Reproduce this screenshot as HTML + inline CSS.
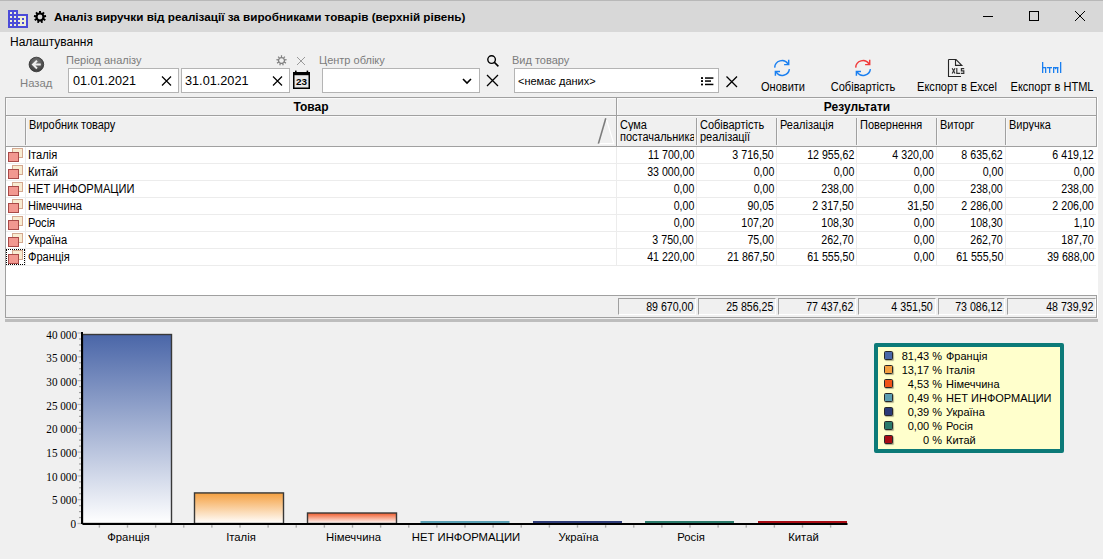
<!DOCTYPE html>
<html><head><meta charset="utf-8"><style>
html,body{margin:0;padding:0;}
body{width:1103px;height:559px;overflow:hidden;background:#f0f0f0;position:relative;font-family:"Liberation Sans",sans-serif;}
.t{position:absolute;white-space:nowrap;}
.b{position:absolute;}
</style></head><body>
<div class="b" style="left:0px;top:0px;width:1103px;height:1px;background:#b8b8b8"></div>
<div class="b" style="left:0px;top:1px;width:1103px;height:31px;background:#d8d8d8"></div>
<svg class="b" style="left:0;top:0" width="50" height="32" viewBox="0 0 50 32">
<path fill="#4b4bd8" d="M8 10h10v4h10v14H8z"/>
<path fill="#f0efd6" d="M18 16h8v10h-8z"/>
<g fill="#f0efd6"><rect x="10" y="12" width="2" height="2"/><rect x="14" y="12" width="2" height="2"/>
<rect x="10" y="16" width="2" height="2"/><rect x="14" y="16" width="2" height="2"/>
<rect x="10" y="20" width="2" height="2"/><rect x="14" y="20" width="2" height="2"/>
<rect x="10" y="24" width="2" height="2"/><rect x="14" y="24" width="2" height="2"/></g>
<g fill="#4b4bd8"><rect x="18" y="18" width="2" height="2"/><rect x="22" y="18" width="2" height="2"/>
<rect x="18" y="22" width="2" height="2"/><rect x="22" y="22" width="2" height="2"/></g>
<path fill="#000" d="M39.04 12.50L38.97 10.89L41.03 10.89L40.96 12.50L42.16 12.94L43.14 11.65L44.72 12.98L43.62 14.17L44.27 15.28L45.84 14.92L46.20 16.96L44.60 17.16L44.37 18.42L45.81 19.16L44.78 20.95L43.42 20.08L42.44 20.90L43.06 22.39L41.12 23.10L40.64 21.56L39.36 21.56L38.88 23.10L36.94 22.39L37.56 20.90L36.58 20.08L35.22 20.95L34.19 19.16L35.63 18.42L35.40 17.16L33.80 16.96L34.16 14.92L35.73 15.28L36.38 14.17L35.28 12.98L36.86 11.65L37.84 12.94Z"/><circle cx="40" cy="17" r="2.4" fill="#d8d8d8"/>
</svg>
<div class="t" style="left:54px;top:11.10px;font-size:11.7px;line-height:11.7px;color:#000;font-family:'Liberation Sans', sans-serif;font-weight:bold;">Аналіз виручки від реалізації за виробниками товарів (верхній рівень)</div>
<svg class="b" style="left:970px;top:0" width="133" height="31" viewBox="0 0 133 31">
<path d="M13 16.5h10" stroke="#000" stroke-width="1"/>
<rect x="59.5" y="11.5" width="9" height="9" fill="none" stroke="#000" stroke-width="1"/>
<path d="M105 11l10 10M115 11l-10 10" stroke="#000" stroke-width="1"/>
</svg>
<div class="t" style="left:10px;top:35.84px;font-size:12px;line-height:12px;color:#000;font-family:'Liberation Sans', sans-serif;">Налаштування</div>
<svg class="b" style="left:28px;top:56px" width="17" height="17" viewBox="0 0 17 17">
<defs><radialGradient id="bg1" cx="50%" cy="35%" r="60%"><stop offset="0" stop-color="#7a7a7a"/><stop offset="1" stop-color="#404040"/></radialGradient></defs>
<circle cx="8.4" cy="8.5" r="7.3" fill="url(#bg1)" stroke="#2e2e2e" stroke-width="0.8"/>
<path d="M12.8 8.6H5M9 4.8L5 8.6l4 3.8" stroke="#eeeeee" stroke-width="2" fill="none"/>
</svg>
<div class="t" style="left:20px;top:78.43px;font-size:11.3px;line-height:11.3px;color:#808080;font-family:'Liberation Sans', sans-serif;">Назад</div>
<div class="t" style="left:66px;top:54.69px;font-size:11px;line-height:11px;color:#7c7c7c;font-family:'Liberation Sans', sans-serif;">Період аналізу</div>
<div class="t" style="left:319px;top:54.69px;font-size:11px;line-height:11px;color:#7c7c7c;font-family:'Liberation Sans', sans-serif;">Центр обліку</div>
<div class="t" style="left:512px;top:54.69px;font-size:11px;line-height:11px;color:#7c7c7c;font-family:'Liberation Sans', sans-serif;">Вид товару</div>
<svg class="b" style="left:270px;top:50px" width="40" height="20" viewBox="0 0 40 20">
<path fill="#808080" d="M10.94 6.94L10.85 5.34L12.15 5.34L12.06 6.94L13.35 7.41L14.32 6.13L15.32 6.97L14.22 8.14L14.90 9.33L16.47 8.96L16.69 10.25L15.10 10.44L14.86 11.79L16.29 12.52L15.64 13.64L14.30 12.77L13.25 13.65L13.88 15.12L12.65 15.57L12.19 14.03L10.81 14.03L10.35 15.57L9.12 15.12L9.75 13.65L8.70 12.77L7.36 13.64L6.71 12.52L8.14 11.79L7.90 10.44L6.31 10.25L6.53 8.96L8.10 9.33L8.78 8.14L7.68 6.97L8.68 6.13L9.65 7.41Z"/><circle cx="11.5" cy="10.5" r="2.3" fill="#f0f0f0"/>
<path d="M27 7l8 8M35 7l-8 8" stroke="#9a9a9a" stroke-width="1"/>
</svg>
<div class="b" style="left:68px;top:68px;width:111px;height:25px;background:#fff;border:1px solid #b4b4b4;box-sizing:border-box"></div>
<div class="b" style="left:181px;top:68px;width:109px;height:25px;background:#fff;border:1px solid #b4b4b4;box-sizing:border-box"></div>
<div class="t" style="left:73px;top:75.33px;font-size:12.6px;line-height:12.6px;color:#000;font-family:'Liberation Sans', sans-serif;">01.01.2021</div>
<div class="t" style="left:185px;top:75.25px;font-size:12.7px;line-height:12.7px;color:#000;font-family:'Liberation Sans', sans-serif;">31.01.2021</div>
<svg class="b" style="left:160px;top:74px" width="14" height="14" viewBox="0 0 14 14"><path d="M2 2.5l9 9M11 2.5l-9 9" stroke="#000" stroke-width="1.2"/></svg>
<svg class="b" style="left:271px;top:74px" width="14" height="14" viewBox="0 0 14 14"><path d="M2 2.5l9 9M11 2.5l-9 9" stroke="#000" stroke-width="1.2"/></svg>
<svg class="b" style="left:292px;top:70px" width="20" height="21" viewBox="0 0 20 21">
<rect x="1.75" y="2.75" width="15.5" height="15.5" fill="#e9e9e9" stroke="#000" stroke-width="1.5"/>
<rect x="1" y="2" width="17" height="3.2" fill="#000"/>
<rect x="3" y="0.6" width="1.6" height="2" fill="#000"/><rect x="14.6" y="0.6" width="1.6" height="2" fill="#000"/>
<text x="4" y="15.3" font-family="Liberation Sans" font-weight="bold" font-size="8.4" fill="#000" textLength="11" lengthAdjust="spacingAndGlyphs">23</text>
</svg>
<div class="b" style="left:322px;top:68px;width:158px;height:25px;background:#fff;border:1px solid #b4b4b4;box-sizing:border-box"></div>
<svg class="b" style="left:460px;top:76px" width="14" height="10" viewBox="0 0 14 10"><path d="M3 3l4 4 4-4" stroke="#000" stroke-width="1.6" fill="none"/></svg>
<svg class="b" style="left:484px;top:53px" width="18" height="16" viewBox="0 0 18 16"><circle cx="7.6" cy="6.6" r="3.8" stroke="#000" stroke-width="1.4" fill="none"/><path d="M10.4 9.4l4 4" stroke="#000" stroke-width="1.5"/></svg>
<svg class="b" style="left:485px;top:73px" width="16" height="15" viewBox="0 0 16 15"><path d="M2 2l11 11M13 2l-11 11" stroke="#000" stroke-width="1.3"/></svg>
<div class="b" style="left:514px;top:68px;width:205px;height:25px;background:#fff;border:1px solid #b4b4b4;box-sizing:border-box"></div>
<div class="t" style="left:518px;top:75.69px;font-size:11px;line-height:11px;color:#000;font-family:'Liberation Sans', sans-serif;">&lt;немає даних&gt;</div>
<svg class="b" style="left:699px;top:75px" width="17" height="12" viewBox="0 0 17 12">
<rect x="2" y="2" width="2" height="2" rx="0.6" fill="#000"/><rect x="6" y="2.3" width="8.4" height="1.5" fill="#000"/>
<rect x="2" y="5" width="2" height="2" rx="0.6" fill="#000"/><rect x="6" y="5.3" width="6" height="1.5" fill="#000"/>
<rect x="2" y="8.4" width="2" height="2" rx="0.6" fill="#000"/><rect x="6" y="8.7" width="8.4" height="1.5" fill="#000"/>
</svg>
<svg class="b" style="left:724px;top:74px" width="16" height="15" viewBox="0 0 16 15"><path d="M2.5 2.5l10.5 10.5M13 2.5l-10.5 10.5" stroke="#000" stroke-width="1.3"/></svg>
<svg class="b" style="left:772px;top:58px" width="20" height="20" viewBox="0 0 20 20">
<path d="M2.7 9.6A7.3 7.3 0 0 1 16 5.8" stroke="#1a7ff0" stroke-width="1.45" fill="none"/>
<path d="M16.7 1.8v4.8h-4.6" stroke="#1a7ff0" stroke-width="1.45" fill="none"/>
<path d="M17.4 11.2A7.3 7.3 0 0 1 4.1 14.2" stroke="#1a7ff0" stroke-width="1.45" fill="none"/>
<path d="M3.4 17.8v-4.4h4.6" stroke="#1a7ff0" stroke-width="1.45" fill="none"/>
</svg>
<svg class="b" style="left:853px;top:58px" width="20" height="20" viewBox="0 0 20 20">
<path d="M2.7 9.6A7.3 7.3 0 0 1 16 5.8" stroke="#f03a3a" stroke-width="1.45" fill="none"/>
<path d="M16.7 1.8v4.8h-4.6" stroke="#f03a3a" stroke-width="1.45" fill="none"/>
<path d="M17.4 11.2A7.3 7.3 0 0 1 4.1 14.2" stroke="#1a7ff0" stroke-width="1.45" fill="none"/>
<path d="M3.4 17.8v-4.4h4.6" stroke="#1a7ff0" stroke-width="1.45" fill="none"/>
</svg>
<svg class="b" style="left:944px;top:56px" width="24" height="24" viewBox="0 0 24 24">
<path d="M4.5 3.5V20.5H17M4.5 3.5H12L17.8 9.4H11.5V3.5" fill="none" stroke="#262626" stroke-width="1.1"/>
<path d="M8.2 12.2L11 17.6M11 12.2L8.2 17.6M12.8 12V17.3H16M20.2 12.6H17.4V14.8H19.8V17.3H16.8" fill="none" stroke="#303030" stroke-width="1.15"/>
</svg>
<svg class="b" style="left:1038px;top:58px" width="28" height="20" viewBox="0 0 28 20" fill="#1a7ff0">
<rect x="4" y="4" width="1.3" height="11"/><rect x="4" y="9" width="4" height="1.3"/><rect x="7" y="9" width="1.3" height="6"/>
<rect x="9" y="9" width="5" height="1.3"/><rect x="11" y="9" width="1.3" height="6"/>
<rect x="15" y="9" width="1.3" height="6"/><rect x="19" y="9" width="1.3" height="6"/><rect x="15" y="9" width="5.3" height="1.3"/><rect x="17" y="10" width="1.3" height="1.2"/>
<rect x="22" y="4" width="1.3" height="11"/>
</svg>
<div class="t" style="left:583px;width:400px;text-align:center;top:80.84px;font-size:12px;line-height:12px;color:#000;font-family:'Liberation Sans', sans-serif;transform:scaleX(0.92);">Оновити</div>
<div class="t" style="left:663px;width:400px;text-align:center;top:80.84px;font-size:12px;line-height:12px;color:#000;font-family:'Liberation Sans', sans-serif;transform:scaleX(0.92);">Собівартість</div>
<div class="t" style="left:757px;width:400px;text-align:center;top:80.84px;font-size:12px;line-height:12px;color:#000;font-family:'Liberation Sans', sans-serif;transform:scaleX(0.92);">Експорт в Excel</div>
<div class="t" style="left:852px;width:400px;text-align:center;top:80.84px;font-size:12px;line-height:12px;color:#000;font-family:'Liberation Sans', sans-serif;transform:scaleX(0.92);">Експорт в HTML</div>
<div class="b" style="left:5px;top:97px;width:1092px;height:221px;background:#fff;border-left:1px solid #a0a0a0;border-top:1px solid #a0a0a0;box-sizing:border-box"></div>
<div class="b" style="left:1097px;top:97px;width:1px;height:221px;background:#fff"></div>
<div class="b" style="left:1096px;top:97px;width:1px;height:50px;background:#a0a0a0"></div>
<div class="b" style="left:6px;top:98px;width:1090px;height:48px;background:#f0f0f0"></div>
<div class="b" style="left:6px;top:98px;width:1090px;height:1px;background:#fafafa"></div>
<div class="b" style="left:6px;top:116px;width:1090px;height:1px;background:#fafafa"></div>
<div class="b" style="left:6px;top:98px;width:1px;height:48px;background:#fafafa"></div>
<div class="b" style="left:617px;top:98px;width:1px;height:48px;background:#fafafa"></div>
<div class="b" style="left:6px;top:115px;width:1090px;height:1px;background:#a0a0a0"></div>
<div class="b" style="left:6px;top:146px;width:1090px;height:1px;background:#a0a0a0"></div>
<div class="b" style="left:616px;top:98px;width:1px;height:48px;background:#a0a0a0"></div>
<div class="t" style="left:111px;width:400px;text-align:center;top:100.84px;font-size:12px;line-height:12px;color:#000;font-family:'Liberation Sans', sans-serif;font-weight:bold;">Товар</div>
<div class="t" style="left:657px;width:400px;text-align:center;top:100.84px;font-size:12px;line-height:12px;color:#000;font-family:'Liberation Sans', sans-serif;font-weight:bold;">Результати</div>
<div class="b" style="left:25px;top:118px;width:1px;height:27px;background:#a0a0a0"></div>
<div class="b" style="left:26px;top:118px;width:1px;height:27px;background:#f8f8f8"></div>
<div class="b" style="left:696px;top:118px;width:1px;height:27px;background:#a0a0a0"></div>
<div class="b" style="left:697px;top:118px;width:1px;height:27px;background:#f8f8f8"></div>
<div class="b" style="left:776px;top:118px;width:1px;height:27px;background:#a0a0a0"></div>
<div class="b" style="left:777px;top:118px;width:1px;height:27px;background:#f8f8f8"></div>
<div class="b" style="left:856px;top:118px;width:1px;height:27px;background:#a0a0a0"></div>
<div class="b" style="left:857px;top:118px;width:1px;height:27px;background:#f8f8f8"></div>
<div class="b" style="left:936px;top:118px;width:1px;height:27px;background:#a0a0a0"></div>
<div class="b" style="left:937px;top:118px;width:1px;height:27px;background:#f8f8f8"></div>
<div class="b" style="left:1005px;top:118px;width:1px;height:27px;background:#a0a0a0"></div>
<div class="b" style="left:1006px;top:118px;width:1px;height:27px;background:#f8f8f8"></div>
<div class="t" style="left:29px;top:119.14px;font-size:12px;line-height:12px;color:#000;font-family:'Liberation Sans', sans-serif;transform:scaleX(0.915);transform-origin:0 50%;">Виробник товару</div>
<div class="t" style="left:620px;top:119.14px;font-size:12px;line-height:12px;color:#000;font-family:'Liberation Sans', sans-serif;width:80.9px;overflow:hidden;white-space:nowrap;transform:scaleX(0.915);transform-origin:0 50%;">Сума</div>
<div class="t" style="left:620px;top:131.14px;font-size:12px;line-height:12px;color:#000;font-family:'Liberation Sans', sans-serif;width:80.9px;overflow:hidden;white-space:nowrap;transform:scaleX(0.915);transform-origin:0 50%;">постачальника</div>
<div class="t" style="left:700px;top:119.14px;font-size:12px;line-height:12px;color:#000;font-family:'Liberation Sans', sans-serif;width:80.9px;overflow:hidden;white-space:nowrap;transform:scaleX(0.915);transform-origin:0 50%;">Собівартість</div>
<div class="t" style="left:700px;top:131.14px;font-size:12px;line-height:12px;color:#000;font-family:'Liberation Sans', sans-serif;width:80.9px;overflow:hidden;white-space:nowrap;transform:scaleX(0.915);transform-origin:0 50%;">реалізації</div>
<div class="t" style="left:780px;top:119.14px;font-size:12px;line-height:12px;color:#000;font-family:'Liberation Sans', sans-serif;width:80.9px;overflow:hidden;white-space:nowrap;transform:scaleX(0.915);transform-origin:0 50%;">Реалізація</div>
<div class="t" style="left:860px;top:119.14px;font-size:12px;line-height:12px;color:#000;font-family:'Liberation Sans', sans-serif;width:80.9px;overflow:hidden;white-space:nowrap;transform:scaleX(0.915);transform-origin:0 50%;">Повернення</div>
<div class="t" style="left:940px;top:119.14px;font-size:12px;line-height:12px;color:#000;font-family:'Liberation Sans', sans-serif;width:68.9px;overflow:hidden;white-space:nowrap;transform:scaleX(0.915);transform-origin:0 50%;">Виторг</div>
<div class="t" style="left:1009px;top:119.14px;font-size:12px;line-height:12px;color:#000;font-family:'Liberation Sans', sans-serif;width:92.9px;overflow:hidden;white-space:nowrap;transform:scaleX(0.915);transform-origin:0 50%;">Виручка</div>
<svg class="b" style="left:596px;top:116px" width="20" height="30" viewBox="0 0 20 30">
<path d="M10 2.3L17.8 27.6H2.5" stroke="#fff" stroke-width="1.2" fill="none"/>
<path d="M2.4 27.6L9.8 2.3" stroke="#7c7c7c" stroke-width="1.6"/>
</svg>
<div class="b" style="left:6px;top:163px;width:1090px;height:1px;background:#ececec"></div>
<div class="b" style="left:25px;top:147px;width:1px;height:16px;background:#ececec"></div>
<div class="b" style="left:616px;top:147px;width:1px;height:16px;background:#ececec"></div>
<div class="b" style="left:696px;top:147px;width:1px;height:16px;background:#ececec"></div>
<div class="b" style="left:776px;top:147px;width:1px;height:16px;background:#ececec"></div>
<div class="b" style="left:856px;top:147px;width:1px;height:16px;background:#ececec"></div>
<div class="b" style="left:936px;top:147px;width:1px;height:16px;background:#ececec"></div>
<div class="b" style="left:1005px;top:147px;width:1px;height:16px;background:#ececec"></div>
<svg class="b" style="left:7px;top:147px" width="18" height="16" viewBox="0 0 18 16">
<rect x="5.5" y="1.5" width="10" height="9" fill="#f8ecd2" stroke="#d4a890"/>
<rect x="1.5" y="5.5" width="10" height="9" fill="#f29890" stroke="#a84a48"/>
</svg>
<div class="t" style="left:28px;top:149.14px;font-size:12px;line-height:12px;color:#000;font-family:'Liberation Sans', sans-serif;transform:scaleX(0.925);transform-origin:0 50%;">Італія</div>
<div class="t" style="right:409px;top:149.14px;font-size:12px;line-height:12px;color:#000;font-family:'Liberation Sans', sans-serif;transform:scaleX(0.885);transform-origin:100% 50%;">11 700,00</div>
<div class="t" style="right:329px;top:149.14px;font-size:12px;line-height:12px;color:#000;font-family:'Liberation Sans', sans-serif;transform:scaleX(0.885);transform-origin:100% 50%;">3 716,50</div>
<div class="t" style="right:249px;top:149.14px;font-size:12px;line-height:12px;color:#000;font-family:'Liberation Sans', sans-serif;transform:scaleX(0.885);transform-origin:100% 50%;">12 955,62</div>
<div class="t" style="right:169px;top:149.14px;font-size:12px;line-height:12px;color:#000;font-family:'Liberation Sans', sans-serif;transform:scaleX(0.885);transform-origin:100% 50%;">4 320,00</div>
<div class="t" style="right:100px;top:149.14px;font-size:12px;line-height:12px;color:#000;font-family:'Liberation Sans', sans-serif;transform:scaleX(0.885);transform-origin:100% 50%;">8 635,62</div>
<div class="t" style="right:9px;top:149.14px;font-size:12px;line-height:12px;color:#000;font-family:'Liberation Sans', sans-serif;transform:scaleX(0.885);transform-origin:100% 50%;">6 419,12</div>
<div class="b" style="left:6px;top:180px;width:1090px;height:1px;background:#ececec"></div>
<div class="b" style="left:25px;top:164px;width:1px;height:16px;background:#ececec"></div>
<div class="b" style="left:616px;top:164px;width:1px;height:16px;background:#ececec"></div>
<div class="b" style="left:696px;top:164px;width:1px;height:16px;background:#ececec"></div>
<div class="b" style="left:776px;top:164px;width:1px;height:16px;background:#ececec"></div>
<div class="b" style="left:856px;top:164px;width:1px;height:16px;background:#ececec"></div>
<div class="b" style="left:936px;top:164px;width:1px;height:16px;background:#ececec"></div>
<div class="b" style="left:1005px;top:164px;width:1px;height:16px;background:#ececec"></div>
<svg class="b" style="left:7px;top:164px" width="18" height="16" viewBox="0 0 18 16">
<rect x="5.5" y="1.5" width="10" height="9" fill="#f8ecd2" stroke="#d4a890"/>
<rect x="1.5" y="5.5" width="10" height="9" fill="#f29890" stroke="#a84a48"/>
</svg>
<div class="t" style="left:28px;top:166.14px;font-size:12px;line-height:12px;color:#000;font-family:'Liberation Sans', sans-serif;transform:scaleX(0.925);transform-origin:0 50%;">Китай</div>
<div class="t" style="right:409px;top:166.14px;font-size:12px;line-height:12px;color:#000;font-family:'Liberation Sans', sans-serif;transform:scaleX(0.885);transform-origin:100% 50%;">33 000,00</div>
<div class="t" style="right:329px;top:166.14px;font-size:12px;line-height:12px;color:#000;font-family:'Liberation Sans', sans-serif;transform:scaleX(0.885);transform-origin:100% 50%;">0,00</div>
<div class="t" style="right:249px;top:166.14px;font-size:12px;line-height:12px;color:#000;font-family:'Liberation Sans', sans-serif;transform:scaleX(0.885);transform-origin:100% 50%;">0,00</div>
<div class="t" style="right:169px;top:166.14px;font-size:12px;line-height:12px;color:#000;font-family:'Liberation Sans', sans-serif;transform:scaleX(0.885);transform-origin:100% 50%;">0,00</div>
<div class="t" style="right:100px;top:166.14px;font-size:12px;line-height:12px;color:#000;font-family:'Liberation Sans', sans-serif;transform:scaleX(0.885);transform-origin:100% 50%;">0,00</div>
<div class="t" style="right:9px;top:166.14px;font-size:12px;line-height:12px;color:#000;font-family:'Liberation Sans', sans-serif;transform:scaleX(0.885);transform-origin:100% 50%;">0,00</div>
<div class="b" style="left:6px;top:197px;width:1090px;height:1px;background:#ececec"></div>
<div class="b" style="left:25px;top:181px;width:1px;height:16px;background:#ececec"></div>
<div class="b" style="left:616px;top:181px;width:1px;height:16px;background:#ececec"></div>
<div class="b" style="left:696px;top:181px;width:1px;height:16px;background:#ececec"></div>
<div class="b" style="left:776px;top:181px;width:1px;height:16px;background:#ececec"></div>
<div class="b" style="left:856px;top:181px;width:1px;height:16px;background:#ececec"></div>
<div class="b" style="left:936px;top:181px;width:1px;height:16px;background:#ececec"></div>
<div class="b" style="left:1005px;top:181px;width:1px;height:16px;background:#ececec"></div>
<svg class="b" style="left:7px;top:181px" width="18" height="16" viewBox="0 0 18 16">
<rect x="5.5" y="1.5" width="10" height="9" fill="#f8ecd2" stroke="#d4a890"/>
<rect x="1.5" y="5.5" width="10" height="9" fill="#f29890" stroke="#a84a48"/>
</svg>
<div class="t" style="left:28px;top:183.14px;font-size:12px;line-height:12px;color:#000;font-family:'Liberation Sans', sans-serif;transform:scaleX(0.925);transform-origin:0 50%;">НЕТ ИНФОРМАЦИИ</div>
<div class="t" style="right:409px;top:183.14px;font-size:12px;line-height:12px;color:#000;font-family:'Liberation Sans', sans-serif;transform:scaleX(0.885);transform-origin:100% 50%;">0,00</div>
<div class="t" style="right:329px;top:183.14px;font-size:12px;line-height:12px;color:#000;font-family:'Liberation Sans', sans-serif;transform:scaleX(0.885);transform-origin:100% 50%;">0,00</div>
<div class="t" style="right:249px;top:183.14px;font-size:12px;line-height:12px;color:#000;font-family:'Liberation Sans', sans-serif;transform:scaleX(0.885);transform-origin:100% 50%;">238,00</div>
<div class="t" style="right:169px;top:183.14px;font-size:12px;line-height:12px;color:#000;font-family:'Liberation Sans', sans-serif;transform:scaleX(0.885);transform-origin:100% 50%;">0,00</div>
<div class="t" style="right:100px;top:183.14px;font-size:12px;line-height:12px;color:#000;font-family:'Liberation Sans', sans-serif;transform:scaleX(0.885);transform-origin:100% 50%;">238,00</div>
<div class="t" style="right:9px;top:183.14px;font-size:12px;line-height:12px;color:#000;font-family:'Liberation Sans', sans-serif;transform:scaleX(0.885);transform-origin:100% 50%;">238,00</div>
<div class="b" style="left:6px;top:214px;width:1090px;height:1px;background:#ececec"></div>
<div class="b" style="left:25px;top:198px;width:1px;height:16px;background:#ececec"></div>
<div class="b" style="left:616px;top:198px;width:1px;height:16px;background:#ececec"></div>
<div class="b" style="left:696px;top:198px;width:1px;height:16px;background:#ececec"></div>
<div class="b" style="left:776px;top:198px;width:1px;height:16px;background:#ececec"></div>
<div class="b" style="left:856px;top:198px;width:1px;height:16px;background:#ececec"></div>
<div class="b" style="left:936px;top:198px;width:1px;height:16px;background:#ececec"></div>
<div class="b" style="left:1005px;top:198px;width:1px;height:16px;background:#ececec"></div>
<svg class="b" style="left:7px;top:198px" width="18" height="16" viewBox="0 0 18 16">
<rect x="5.5" y="1.5" width="10" height="9" fill="#f8ecd2" stroke="#d4a890"/>
<rect x="1.5" y="5.5" width="10" height="9" fill="#f29890" stroke="#a84a48"/>
</svg>
<div class="t" style="left:28px;top:200.14px;font-size:12px;line-height:12px;color:#000;font-family:'Liberation Sans', sans-serif;transform:scaleX(0.925);transform-origin:0 50%;">Німеччина</div>
<div class="t" style="right:409px;top:200.14px;font-size:12px;line-height:12px;color:#000;font-family:'Liberation Sans', sans-serif;transform:scaleX(0.885);transform-origin:100% 50%;">0,00</div>
<div class="t" style="right:329px;top:200.14px;font-size:12px;line-height:12px;color:#000;font-family:'Liberation Sans', sans-serif;transform:scaleX(0.885);transform-origin:100% 50%;">90,05</div>
<div class="t" style="right:249px;top:200.14px;font-size:12px;line-height:12px;color:#000;font-family:'Liberation Sans', sans-serif;transform:scaleX(0.885);transform-origin:100% 50%;">2 317,50</div>
<div class="t" style="right:169px;top:200.14px;font-size:12px;line-height:12px;color:#000;font-family:'Liberation Sans', sans-serif;transform:scaleX(0.885);transform-origin:100% 50%;">31,50</div>
<div class="t" style="right:100px;top:200.14px;font-size:12px;line-height:12px;color:#000;font-family:'Liberation Sans', sans-serif;transform:scaleX(0.885);transform-origin:100% 50%;">2 286,00</div>
<div class="t" style="right:9px;top:200.14px;font-size:12px;line-height:12px;color:#000;font-family:'Liberation Sans', sans-serif;transform:scaleX(0.885);transform-origin:100% 50%;">2 206,00</div>
<div class="b" style="left:6px;top:231px;width:1090px;height:1px;background:#ececec"></div>
<div class="b" style="left:25px;top:215px;width:1px;height:16px;background:#ececec"></div>
<div class="b" style="left:616px;top:215px;width:1px;height:16px;background:#ececec"></div>
<div class="b" style="left:696px;top:215px;width:1px;height:16px;background:#ececec"></div>
<div class="b" style="left:776px;top:215px;width:1px;height:16px;background:#ececec"></div>
<div class="b" style="left:856px;top:215px;width:1px;height:16px;background:#ececec"></div>
<div class="b" style="left:936px;top:215px;width:1px;height:16px;background:#ececec"></div>
<div class="b" style="left:1005px;top:215px;width:1px;height:16px;background:#ececec"></div>
<svg class="b" style="left:7px;top:215px" width="18" height="16" viewBox="0 0 18 16">
<rect x="5.5" y="1.5" width="10" height="9" fill="#f8ecd2" stroke="#d4a890"/>
<rect x="1.5" y="5.5" width="10" height="9" fill="#f29890" stroke="#a84a48"/>
</svg>
<div class="t" style="left:28px;top:217.14px;font-size:12px;line-height:12px;color:#000;font-family:'Liberation Sans', sans-serif;transform:scaleX(0.925);transform-origin:0 50%;">Росія</div>
<div class="t" style="right:409px;top:217.14px;font-size:12px;line-height:12px;color:#000;font-family:'Liberation Sans', sans-serif;transform:scaleX(0.885);transform-origin:100% 50%;">0,00</div>
<div class="t" style="right:329px;top:217.14px;font-size:12px;line-height:12px;color:#000;font-family:'Liberation Sans', sans-serif;transform:scaleX(0.885);transform-origin:100% 50%;">107,20</div>
<div class="t" style="right:249px;top:217.14px;font-size:12px;line-height:12px;color:#000;font-family:'Liberation Sans', sans-serif;transform:scaleX(0.885);transform-origin:100% 50%;">108,30</div>
<div class="t" style="right:169px;top:217.14px;font-size:12px;line-height:12px;color:#000;font-family:'Liberation Sans', sans-serif;transform:scaleX(0.885);transform-origin:100% 50%;">0,00</div>
<div class="t" style="right:100px;top:217.14px;font-size:12px;line-height:12px;color:#000;font-family:'Liberation Sans', sans-serif;transform:scaleX(0.885);transform-origin:100% 50%;">108,30</div>
<div class="t" style="right:9px;top:217.14px;font-size:12px;line-height:12px;color:#000;font-family:'Liberation Sans', sans-serif;transform:scaleX(0.885);transform-origin:100% 50%;">1,10</div>
<div class="b" style="left:6px;top:248px;width:1090px;height:1px;background:#ececec"></div>
<div class="b" style="left:25px;top:232px;width:1px;height:16px;background:#ececec"></div>
<div class="b" style="left:616px;top:232px;width:1px;height:16px;background:#ececec"></div>
<div class="b" style="left:696px;top:232px;width:1px;height:16px;background:#ececec"></div>
<div class="b" style="left:776px;top:232px;width:1px;height:16px;background:#ececec"></div>
<div class="b" style="left:856px;top:232px;width:1px;height:16px;background:#ececec"></div>
<div class="b" style="left:936px;top:232px;width:1px;height:16px;background:#ececec"></div>
<div class="b" style="left:1005px;top:232px;width:1px;height:16px;background:#ececec"></div>
<svg class="b" style="left:7px;top:232px" width="18" height="16" viewBox="0 0 18 16">
<rect x="5.5" y="1.5" width="10" height="9" fill="#f8ecd2" stroke="#d4a890"/>
<rect x="1.5" y="5.5" width="10" height="9" fill="#f29890" stroke="#a84a48"/>
</svg>
<div class="t" style="left:28px;top:234.14px;font-size:12px;line-height:12px;color:#000;font-family:'Liberation Sans', sans-serif;transform:scaleX(0.925);transform-origin:0 50%;">Україна</div>
<div class="t" style="right:409px;top:234.14px;font-size:12px;line-height:12px;color:#000;font-family:'Liberation Sans', sans-serif;transform:scaleX(0.885);transform-origin:100% 50%;">3 750,00</div>
<div class="t" style="right:329px;top:234.14px;font-size:12px;line-height:12px;color:#000;font-family:'Liberation Sans', sans-serif;transform:scaleX(0.885);transform-origin:100% 50%;">75,00</div>
<div class="t" style="right:249px;top:234.14px;font-size:12px;line-height:12px;color:#000;font-family:'Liberation Sans', sans-serif;transform:scaleX(0.885);transform-origin:100% 50%;">262,70</div>
<div class="t" style="right:169px;top:234.14px;font-size:12px;line-height:12px;color:#000;font-family:'Liberation Sans', sans-serif;transform:scaleX(0.885);transform-origin:100% 50%;">0,00</div>
<div class="t" style="right:100px;top:234.14px;font-size:12px;line-height:12px;color:#000;font-family:'Liberation Sans', sans-serif;transform:scaleX(0.885);transform-origin:100% 50%;">262,70</div>
<div class="t" style="right:9px;top:234.14px;font-size:12px;line-height:12px;color:#000;font-family:'Liberation Sans', sans-serif;transform:scaleX(0.885);transform-origin:100% 50%;">187,70</div>
<div class="b" style="left:6px;top:265px;width:1090px;height:1px;background:#ececec"></div>
<div class="b" style="left:25px;top:249px;width:1px;height:16px;background:#ececec"></div>
<div class="b" style="left:616px;top:249px;width:1px;height:16px;background:#ececec"></div>
<div class="b" style="left:696px;top:249px;width:1px;height:16px;background:#ececec"></div>
<div class="b" style="left:776px;top:249px;width:1px;height:16px;background:#ececec"></div>
<div class="b" style="left:856px;top:249px;width:1px;height:16px;background:#ececec"></div>
<div class="b" style="left:936px;top:249px;width:1px;height:16px;background:#ececec"></div>
<div class="b" style="left:1005px;top:249px;width:1px;height:16px;background:#ececec"></div>
<svg class="b" style="left:7px;top:249px" width="18" height="16" viewBox="0 0 18 16">
<rect x="5.5" y="1.5" width="10" height="9" fill="#f8ecd2" stroke="#d4a890"/>
<rect x="1.5" y="5.5" width="10" height="9" fill="#f29890" stroke="#a84a48"/>
</svg>
<div class="t" style="left:28px;top:251.14px;font-size:12px;line-height:12px;color:#000;font-family:'Liberation Sans', sans-serif;transform:scaleX(0.925);transform-origin:0 50%;">Франція</div>
<div class="t" style="right:409px;top:251.14px;font-size:12px;line-height:12px;color:#000;font-family:'Liberation Sans', sans-serif;transform:scaleX(0.885);transform-origin:100% 50%;">41 220,00</div>
<div class="t" style="right:329px;top:251.14px;font-size:12px;line-height:12px;color:#000;font-family:'Liberation Sans', sans-serif;transform:scaleX(0.885);transform-origin:100% 50%;">21 867,50</div>
<div class="t" style="right:249px;top:251.14px;font-size:12px;line-height:12px;color:#000;font-family:'Liberation Sans', sans-serif;transform:scaleX(0.885);transform-origin:100% 50%;">61 555,50</div>
<div class="t" style="right:169px;top:251.14px;font-size:12px;line-height:12px;color:#000;font-family:'Liberation Sans', sans-serif;transform:scaleX(0.885);transform-origin:100% 50%;">0,00</div>
<div class="t" style="right:100px;top:251.14px;font-size:12px;line-height:12px;color:#000;font-family:'Liberation Sans', sans-serif;transform:scaleX(0.885);transform-origin:100% 50%;">61 555,50</div>
<div class="t" style="right:9px;top:251.14px;font-size:12px;line-height:12px;color:#000;font-family:'Liberation Sans', sans-serif;transform:scaleX(0.885);transform-origin:100% 50%;">39 688,00</div>
<div class="b" style="left:6px;top:249px;width:19px;height:16px;border:1px dotted #000;box-sizing:border-box"></div>
<div class="b" style="left:6px;top:295px;width:1090px;height:1px;background:#a0a0a0"></div>
<div class="b" style="left:6px;top:296px;width:1090px;height:21px;background:#f0f0f0"></div>
<div class="b" style="left:1096px;top:295px;width:1px;height:23px;background:#a0a0a0"></div>
<div class="b" style="left:5px;top:317px;width:1092px;height:1px;background:#a0a0a0"></div>
<div class="b" style="left:618px;top:298px;width:78px;height:17px;border-top:1px solid #a0a0a0;border-left:1px solid #a0a0a0;border-right:1px solid #fff;border-bottom:1px solid #fff;box-sizing:border-box"></div>
<div class="t" style="right:410px;top:301.14px;font-size:12px;line-height:12px;color:#000;font-family:'Liberation Sans', sans-serif;transform:scaleX(0.885);transform-origin:100% 50%;">89 670,00</div>
<div class="b" style="left:698px;top:298px;width:78px;height:17px;border-top:1px solid #a0a0a0;border-left:1px solid #a0a0a0;border-right:1px solid #fff;border-bottom:1px solid #fff;box-sizing:border-box"></div>
<div class="t" style="right:330px;top:301.14px;font-size:12px;line-height:12px;color:#000;font-family:'Liberation Sans', sans-serif;transform:scaleX(0.885);transform-origin:100% 50%;">25 856,25</div>
<div class="b" style="left:778px;top:298px;width:78px;height:17px;border-top:1px solid #a0a0a0;border-left:1px solid #a0a0a0;border-right:1px solid #fff;border-bottom:1px solid #fff;box-sizing:border-box"></div>
<div class="t" style="right:250px;top:301.14px;font-size:12px;line-height:12px;color:#000;font-family:'Liberation Sans', sans-serif;transform:scaleX(0.885);transform-origin:100% 50%;">77 437,62</div>
<div class="b" style="left:858px;top:298px;width:78px;height:17px;border-top:1px solid #a0a0a0;border-left:1px solid #a0a0a0;border-right:1px solid #fff;border-bottom:1px solid #fff;box-sizing:border-box"></div>
<div class="t" style="right:170px;top:301.14px;font-size:12px;line-height:12px;color:#000;font-family:'Liberation Sans', sans-serif;transform:scaleX(0.885);transform-origin:100% 50%;">4 351,50</div>
<div class="b" style="left:938px;top:298px;width:67px;height:17px;border-top:1px solid #a0a0a0;border-left:1px solid #a0a0a0;border-right:1px solid #fff;border-bottom:1px solid #fff;box-sizing:border-box"></div>
<div class="t" style="right:101px;top:301.14px;font-size:12px;line-height:12px;color:#000;font-family:'Liberation Sans', sans-serif;transform:scaleX(0.885);transform-origin:100% 50%;">73 086,12</div>
<div class="b" style="left:1007px;top:298px;width:89px;height:17px;border-top:1px solid #a0a0a0;border-left:1px solid #a0a0a0;border-right:1px solid #fff;border-bottom:1px solid #fff;box-sizing:border-box"></div>
<div class="t" style="right:10px;top:301.14px;font-size:12px;line-height:12px;color:#000;font-family:'Liberation Sans', sans-serif;transform:scaleX(0.885);transform-origin:100% 50%;">48 739,92</div>
<div class="b" style="left:5px;top:319px;width:1093px;height:3px;background:#bdbdbd"></div>
<div class="t" style="right:1027.4px;top:517.84px;font-size:12px;line-height:12px;color:#000;font-family:'Liberation Serif', serif;transform:scaleX(0.93);transform-origin:100% 50%;">0</div>
<div class="t" style="right:1026px;top:494.22px;font-size:12px;line-height:12px;color:#000;font-family:'Liberation Serif', serif;transform:scaleX(0.93);transform-origin:100% 50%;">5 000</div>
<div class="t" style="right:1026px;top:470.59px;font-size:12px;line-height:12px;color:#000;font-family:'Liberation Serif', serif;transform:scaleX(0.93);transform-origin:100% 50%;">10 000</div>
<div class="t" style="right:1026px;top:446.97px;font-size:12px;line-height:12px;color:#000;font-family:'Liberation Serif', serif;transform:scaleX(0.93);transform-origin:100% 50%;">15 000</div>
<div class="t" style="right:1026px;top:423.34px;font-size:12px;line-height:12px;color:#000;font-family:'Liberation Serif', serif;transform:scaleX(0.93);transform-origin:100% 50%;">20 000</div>
<div class="t" style="right:1026px;top:399.72px;font-size:12px;line-height:12px;color:#000;font-family:'Liberation Serif', serif;transform:scaleX(0.93);transform-origin:100% 50%;">25 000</div>
<div class="t" style="right:1026px;top:376.09px;font-size:12px;line-height:12px;color:#000;font-family:'Liberation Serif', serif;transform:scaleX(0.93);transform-origin:100% 50%;">30 000</div>
<div class="t" style="right:1026px;top:352.47px;font-size:12px;line-height:12px;color:#000;font-family:'Liberation Serif', serif;transform:scaleX(0.93);transform-origin:100% 50%;">35 000</div>
<div class="t" style="right:1026px;top:328.84px;font-size:12px;line-height:12px;color:#000;font-family:'Liberation Serif', serif;transform:scaleX(0.93);transform-origin:100% 50%;">40 000</div>
<svg class="b" style="left:0;top:320px" width="1103" height="239" viewBox="0 320 1103 239"><defs>
<linearGradient id="g0" x1="0" y1="0" x2="0" y2="1"><stop offset="0" stop-color="#4a66a8"/><stop offset="1" stop-color="#ffffff"/></linearGradient>
<linearGradient id="g1" x1="0" y1="0" x2="0" y2="1"><stop offset="0" stop-color="#f5a040"/><stop offset="1" stop-color="#ffffff"/></linearGradient>
<linearGradient id="g2" x1="0" y1="0" x2="0" y2="1"><stop offset="0" stop-color="#ef5a2a"/><stop offset="1" stop-color="#ffffff"/></linearGradient>
<linearGradient id="g3" x1="0" y1="0" x2="0" y2="1"><stop offset="0" stop-color="#5aa0b4"/><stop offset="1" stop-color="#ffffff"/></linearGradient>
<linearGradient id="g4" x1="0" y1="0" x2="0" y2="1"><stop offset="0" stop-color="#2e3c78"/><stop offset="1" stop-color="#ffffff"/></linearGradient>
<linearGradient id="g5" x1="0" y1="0" x2="0" y2="1"><stop offset="0" stop-color="#2a7a6a"/><stop offset="1" stop-color="#ffffff"/></linearGradient>
<linearGradient id="g6" x1="0" y1="0" x2="0" y2="1"><stop offset="0" stop-color="#a80c14"/><stop offset="1" stop-color="#ffffff"/></linearGradient>
</defs>
<rect x="77.5" y="522.90" width="3.5" height="1.2" fill="#b4b4b4"/>
<rect x="79" y="516.95" width="2" height="1.2" fill="#a0a0a0"/>
<rect x="79" y="511.00" width="2" height="1.2" fill="#a0a0a0"/>
<rect x="79" y="505.04" width="2" height="1.2" fill="#a0a0a0"/>
<rect x="77.5" y="499.09" width="3.5" height="1.2" fill="#b4b4b4"/>
<rect x="79" y="493.14" width="2" height="1.2" fill="#a0a0a0"/>
<rect x="79" y="487.19" width="2" height="1.2" fill="#a0a0a0"/>
<rect x="79" y="481.23" width="2" height="1.2" fill="#a0a0a0"/>
<rect x="77.5" y="475.28" width="3.5" height="1.2" fill="#b4b4b4"/>
<rect x="79" y="469.33" width="2" height="1.2" fill="#a0a0a0"/>
<rect x="79" y="463.38" width="2" height="1.2" fill="#a0a0a0"/>
<rect x="79" y="457.42" width="2" height="1.2" fill="#a0a0a0"/>
<rect x="77.5" y="451.47" width="3.5" height="1.2" fill="#b4b4b4"/>
<rect x="79" y="445.52" width="2" height="1.2" fill="#a0a0a0"/>
<rect x="79" y="439.56" width="2" height="1.2" fill="#a0a0a0"/>
<rect x="79" y="433.61" width="2" height="1.2" fill="#a0a0a0"/>
<rect x="77.5" y="427.66" width="3.5" height="1.2" fill="#b4b4b4"/>
<rect x="79" y="421.71" width="2" height="1.2" fill="#a0a0a0"/>
<rect x="79" y="415.75" width="2" height="1.2" fill="#a0a0a0"/>
<rect x="79" y="409.80" width="2" height="1.2" fill="#a0a0a0"/>
<rect x="77.5" y="403.85" width="3.5" height="1.2" fill="#b4b4b4"/>
<rect x="79" y="397.90" width="2" height="1.2" fill="#a0a0a0"/>
<rect x="79" y="391.94" width="2" height="1.2" fill="#a0a0a0"/>
<rect x="79" y="385.99" width="2" height="1.2" fill="#a0a0a0"/>
<rect x="77.5" y="380.04" width="3.5" height="1.2" fill="#b4b4b4"/>
<rect x="79" y="374.09" width="2" height="1.2" fill="#a0a0a0"/>
<rect x="79" y="368.13" width="2" height="1.2" fill="#a0a0a0"/>
<rect x="79" y="362.18" width="2" height="1.2" fill="#a0a0a0"/>
<rect x="77.5" y="356.23" width="3.5" height="1.2" fill="#b4b4b4"/>
<rect x="79" y="350.28" width="2" height="1.2" fill="#a0a0a0"/>
<rect x="79" y="344.32" width="2" height="1.2" fill="#a0a0a0"/>
<rect x="79" y="338.37" width="2" height="1.2" fill="#a0a0a0"/>
<rect x="77.5" y="332.42" width="3.5" height="1.2" fill="#b4b4b4"/>
<rect x="82.5" y="334.51" width="89" height="188.99" fill="url(#g0)" stroke="#383838" stroke-width="1.4"/>
<rect x="194.5" y="492.93" width="89" height="30.57" fill="url(#g1)" stroke="#383838" stroke-width="1.4"/>
<rect x="307.5" y="513.00" width="89" height="10.50" fill="url(#g2)" stroke="#383838" stroke-width="1.4"/>
<rect x="420.5" y="521" width="89" height="2.5" fill="#5aa0b4"/>
<rect x="533.0" y="521" width="89" height="2.5" fill="#2e3c78"/>
<rect x="645.0" y="521" width="89" height="2.5" fill="#2a7a6a"/>
<rect x="758.0" y="521" width="89" height="2.5" fill="#a80c14"/>
<rect x="81" y="332" width="2" height="192" fill="#000"/>
<rect x="82.5" y="523" width="765" height="2" fill="#000"/>
<rect x="98.67" y="525.2" width="1.4" height="2.4" fill="#a8a8a8"/>
<rect x="126.80" y="525.2" width="1.4" height="2.4" fill="#a8a8a8"/>
<rect x="154.93" y="525.2" width="1.4" height="2.4" fill="#a8a8a8"/>
<rect x="183.05" y="525.2" width="1.4" height="2.4" fill="#a8a8a8"/>
<rect x="211.18" y="525.2" width="1.4" height="2.4" fill="#a8a8a8"/>
<rect x="239.30" y="525.2" width="1.4" height="2.4" fill="#a8a8a8"/>
<rect x="267.43" y="525.2" width="1.4" height="2.4" fill="#a8a8a8"/>
<rect x="295.55" y="525.2" width="1.4" height="2.4" fill="#a8a8a8"/>
<rect x="323.68" y="525.2" width="1.4" height="2.4" fill="#a8a8a8"/>
<rect x="351.80" y="525.2" width="1.4" height="2.4" fill="#a8a8a8"/>
<rect x="379.93" y="525.2" width="1.4" height="2.4" fill="#a8a8a8"/>
<rect x="408.05" y="525.2" width="1.4" height="2.4" fill="#a8a8a8"/>
<rect x="436.18" y="525.2" width="1.4" height="2.4" fill="#a8a8a8"/>
<rect x="464.30" y="525.2" width="1.4" height="2.4" fill="#a8a8a8"/>
<rect x="492.43" y="525.2" width="1.4" height="2.4" fill="#a8a8a8"/>
<rect x="520.55" y="525.2" width="1.4" height="2.4" fill="#a8a8a8"/>
<rect x="548.67" y="525.2" width="1.4" height="2.4" fill="#a8a8a8"/>
<rect x="576.80" y="525.2" width="1.4" height="2.4" fill="#a8a8a8"/>
<rect x="604.92" y="525.2" width="1.4" height="2.4" fill="#a8a8a8"/>
<rect x="633.05" y="525.2" width="1.4" height="2.4" fill="#a8a8a8"/>
<rect x="661.17" y="525.2" width="1.4" height="2.4" fill="#a8a8a8"/>
<rect x="689.30" y="525.2" width="1.4" height="2.4" fill="#a8a8a8"/>
<rect x="717.42" y="525.2" width="1.4" height="2.4" fill="#a8a8a8"/>
<rect x="745.55" y="525.2" width="1.4" height="2.4" fill="#a8a8a8"/>
<rect x="773.67" y="525.2" width="1.4" height="2.4" fill="#a8a8a8"/>
<rect x="801.80" y="525.2" width="1.4" height="2.4" fill="#a8a8a8"/>
<rect x="829.92" y="525.2" width="1.4" height="2.4" fill="#a8a8a8"/>
</svg>
<div class="t" style="left:-71.5px;width:400px;text-align:center;top:531.93px;font-size:11.3px;line-height:11.3px;color:#000;font-family:'Liberation Sans', sans-serif;">Франція</div>
<div class="t" style="left:41.0px;width:400px;text-align:center;top:531.93px;font-size:11.3px;line-height:11.3px;color:#000;font-family:'Liberation Sans', sans-serif;">Італія</div>
<div class="t" style="left:153.5px;width:400px;text-align:center;top:531.93px;font-size:11.3px;line-height:11.3px;color:#000;font-family:'Liberation Sans', sans-serif;">Німеччина</div>
<div class="t" style="left:266.0px;width:400px;text-align:center;top:531.93px;font-size:11.3px;line-height:11.3px;color:#000;font-family:'Liberation Sans', sans-serif;">НЕТ ИНФОРМАЦИИ</div>
<div class="t" style="left:378.5px;width:400px;text-align:center;top:531.93px;font-size:11.3px;line-height:11.3px;color:#000;font-family:'Liberation Sans', sans-serif;">Україна</div>
<div class="t" style="left:491.0px;width:400px;text-align:center;top:531.93px;font-size:11.3px;line-height:11.3px;color:#000;font-family:'Liberation Sans', sans-serif;">Росія</div>
<div class="t" style="left:603.5px;width:400px;text-align:center;top:531.93px;font-size:11.3px;line-height:11.3px;color:#000;font-family:'Liberation Sans', sans-serif;">Китай</div>
<div class="b" style="left:874px;top:343px;width:190px;height:110px;background:#ffffcc;border:4px solid #0c7a78;border-radius:2px;box-sizing:border-box"></div>
<div class="b" style="left:884px;top:351px;width:9px;height:9px;background:#4a68a8;border:1px solid #282828;border-radius:1.5px;box-sizing:border-box;box-shadow:1px 1px 1px rgba(0,0,0,.3)"></div>
<div class="t" style="right:161px;top:350.69px;font-size:11px;line-height:11px;color:#000;font-family:'Liberation Sans', sans-serif;">81,43 %</div>
<div class="t" style="left:946px;top:350.69px;font-size:11px;line-height:11px;color:#000;font-family:'Liberation Sans', sans-serif;">Франція</div>
<div class="b" style="left:884px;top:365px;width:9px;height:9px;background:#f4a040;border:1px solid #282828;border-radius:1.5px;box-sizing:border-box;box-shadow:1px 1px 1px rgba(0,0,0,.3)"></div>
<div class="t" style="right:161px;top:364.69px;font-size:11px;line-height:11px;color:#000;font-family:'Liberation Sans', sans-serif;">13,17 %</div>
<div class="t" style="left:946px;top:364.69px;font-size:11px;line-height:11px;color:#000;font-family:'Liberation Sans', sans-serif;">Італія</div>
<div class="b" style="left:884px;top:379px;width:9px;height:9px;background:#f05418;border:1px solid #282828;border-radius:1.5px;box-sizing:border-box;box-shadow:1px 1px 1px rgba(0,0,0,.3)"></div>
<div class="t" style="right:161px;top:378.69px;font-size:11px;line-height:11px;color:#000;font-family:'Liberation Sans', sans-serif;">4,53 %</div>
<div class="t" style="left:946px;top:378.69px;font-size:11px;line-height:11px;color:#000;font-family:'Liberation Sans', sans-serif;">Німеччина</div>
<div class="b" style="left:884px;top:393px;width:9px;height:9px;background:#5a9eb2;border:1px solid #282828;border-radius:1.5px;box-sizing:border-box;box-shadow:1px 1px 1px rgba(0,0,0,.3)"></div>
<div class="t" style="right:161px;top:392.69px;font-size:11px;line-height:11px;color:#000;font-family:'Liberation Sans', sans-serif;">0,49 %</div>
<div class="t" style="left:946px;top:392.69px;font-size:11px;line-height:11px;color:#000;font-family:'Liberation Sans', sans-serif;">НЕТ ИНФОРМАЦИИ</div>
<div class="b" style="left:884px;top:407px;width:9px;height:9px;background:#2a3a78;border:1px solid #282828;border-radius:1.5px;box-sizing:border-box;box-shadow:1px 1px 1px rgba(0,0,0,.3)"></div>
<div class="t" style="right:161px;top:406.69px;font-size:11px;line-height:11px;color:#000;font-family:'Liberation Sans', sans-serif;">0,39 %</div>
<div class="t" style="left:946px;top:406.69px;font-size:11px;line-height:11px;color:#000;font-family:'Liberation Sans', sans-serif;">Україна</div>
<div class="b" style="left:884px;top:421px;width:9px;height:9px;background:#2a7a6a;border:1px solid #282828;border-radius:1.5px;box-sizing:border-box;box-shadow:1px 1px 1px rgba(0,0,0,.3)"></div>
<div class="t" style="right:161px;top:420.69px;font-size:11px;line-height:11px;color:#000;font-family:'Liberation Sans', sans-serif;">0,00 %</div>
<div class="t" style="left:946px;top:420.69px;font-size:11px;line-height:11px;color:#000;font-family:'Liberation Sans', sans-serif;">Росія</div>
<div class="b" style="left:884px;top:435px;width:9px;height:9px;background:#a80c14;border:1px solid #282828;border-radius:1.5px;box-sizing:border-box;box-shadow:1px 1px 1px rgba(0,0,0,.3)"></div>
<div class="t" style="right:161px;top:434.69px;font-size:11px;line-height:11px;color:#000;font-family:'Liberation Sans', sans-serif;">0 %</div>
<div class="t" style="left:946px;top:434.69px;font-size:11px;line-height:11px;color:#000;font-family:'Liberation Sans', sans-serif;">Китай</div>
</body></html>
